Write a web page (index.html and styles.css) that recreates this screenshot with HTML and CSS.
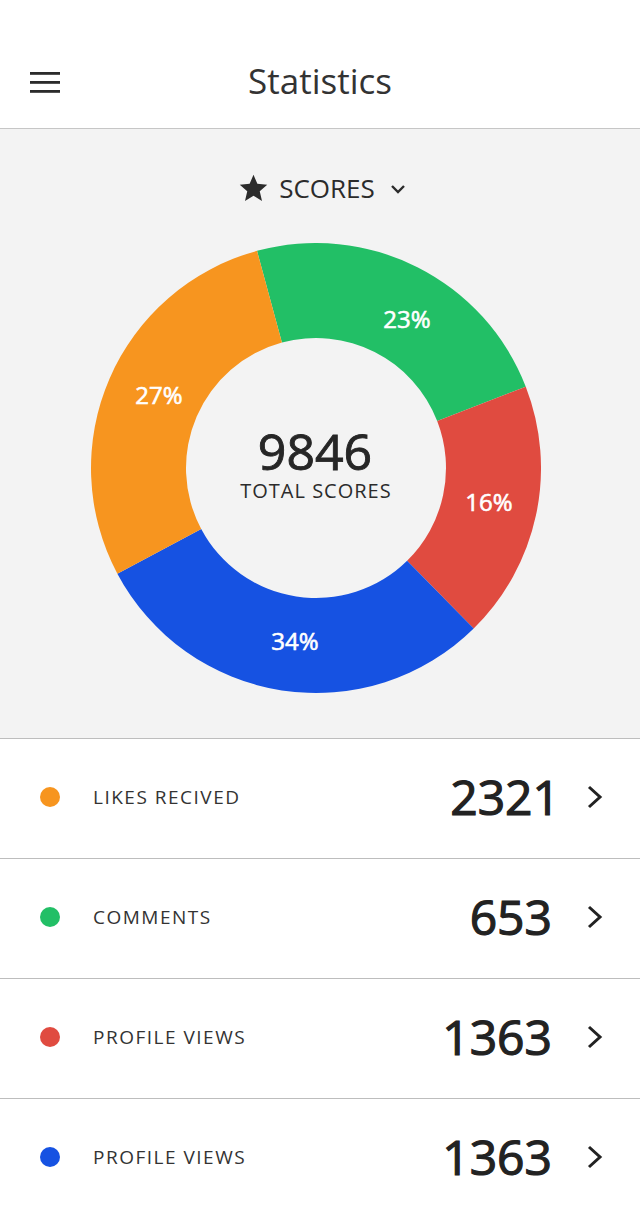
FILE: index.html
```html
<!DOCTYPE html>
<html lang="en">
<head>
<meta charset="utf-8">
<title>Statistics</title>
<link rel="stylesheet" href="styles.css">
</head>
<body>
<div class="app">
  <header class="topbar">
    <button class="menu-btn" aria-label="Menu">
      <svg width="30" height="21" viewBox="0 0 30 21"><rect x="0" y="0" width="30" height="2.8" fill="#2b2b2b"/><rect x="0" y="9" width="30" height="2.8" fill="#2b2b2b"/><rect x="0" y="18" width="30" height="2.8" fill="#2b2b2b"/></svg>
    </button>
    <h1 class="title">Statistics</h1>
    <span class="spacer"></span>
  </header>

  <section class="chart-panel">
    <div class="selector">
      <svg class="star" width="33" height="33" viewBox="0 0 24 24"><path d="M12 17.27L18.18 21l-1.64-7.03L22 9.24l-7.19-.61L12 2 9.19 8.63 2 9.24l5.46 4.73L5.82 21z" fill="#2b2b2b"/></svg>
      <span class="selector-label">SCORES</span>
      <svg class="caret" width="16" height="12" viewBox="0 0 16 12"><path d="M2 3 L8 9 L14 3" fill="none" stroke="#2b2b2b" stroke-width="2.4"/></svg>
    </div>
    <div class="donut-wrap">
      <svg class="donut" width="450" height="450" viewBox="0 0 450 450">
        <path d="M166.01,7.87 A225,225 0 0 1 434.77,143.64 L346.20,177.99 A130,130 0 0 0 190.91,99.55 Z" fill="#22bf66"/>
        <path d="M434.77,143.64 A225,225 0 0 1 382.70,385.49 L316.12,317.73 A130,130 0 0 0 346.20,177.99 Z" fill="#e04b40"/>
        <path d="M382.70,385.49 A225,225 0 0 1 26.35,330.64 L110.22,286.04 A130,130 0 0 0 316.12,317.73 Z" fill="#1652e2"/>
        <path d="M26.35,330.64 A225,225 0 0 1 166.01,7.87 L190.91,99.55 A130,130 0 0 0 110.22,286.04 Z" fill="#f7951f"/>
        <text class="pct" x="316" y="85">23%</text>
        <text class="pct" x="68" y="161">27%</text>
        <text class="pct" x="398" y="268">16%</text>
        <text class="pct" x="204" y="407">34%</text>
        <text class="total" x="224" y="227">9846</text>
        <text class="total-label" x="225" y="255">TOTAL SCORES</text>
      </svg>
    </div>
  </section>

  <ul class="stats">
    <li class="stat">
      <span class="dot dot-orange"></span>
      <span class="stat-label">LIKES RECIVED</span>
      <span class="stat-value stat-value-wide">2321</span>
      <svg class="chev" width="18" height="26" viewBox="0 0 18 26"><path d="M3 3 L14 13 L3 23" fill="none" stroke="#222" stroke-width="3"/></svg>
    </li>
    <li class="stat">
      <span class="dot dot-green"></span>
      <span class="stat-label">COMMENTS</span>
      <span class="stat-value">653</span>
      <svg class="chev" width="18" height="26" viewBox="0 0 18 26"><path d="M3 3 L14 13 L3 23" fill="none" stroke="#222" stroke-width="3"/></svg>
    </li>
    <li class="stat">
      <span class="dot dot-red"></span>
      <span class="stat-label">PROFILE VIEWS</span>
      <span class="stat-value">1363</span>
      <svg class="chev" width="18" height="26" viewBox="0 0 18 26"><path d="M3 3 L14 13 L3 23" fill="none" stroke="#222" stroke-width="3"/></svg>
    </li>
    <li class="stat">
      <span class="dot dot-blue"></span>
      <span class="stat-label">PROFILE VIEWS</span>
      <span class="stat-value">1363</span>
      <svg class="chev" width="18" height="26" viewBox="0 0 18 26"><path d="M3 3 L14 13 L3 23" fill="none" stroke="#222" stroke-width="3"/></svg>
    </li>
  </ul>
</div>
</body>
</html>
```

FILE: styles.css
```css
* { box-sizing: border-box; }
html, body { margin: 0; padding: 0; background: #fff; }
body {
  font-family: "Open Sans", "Noto Sans", "Liberation Sans", sans-serif;
  color: #2b2b2b;
  width: 640px;
}
.app { width: 640px; }

.topbar {
  height: 129px;
  border-bottom: 1px solid #c6c6c6;
  display: grid;
  grid-template-columns: 100px 1fr 100px;
  align-items: center;
  padding-top: 34px;
}
.menu-btn {
  border: 0;
  background: none;
  padding: 0 0 0 30px;
  margin: 3px 0 0 0;
  display: flex;
  align-items: center;
  height: 21px;
  justify-self: start;
}
.menu-btn svg { display: block; }
.title {
  margin: 0;
  text-align: center;
  font-size: 35px;
  font-weight: 400;
  color: #333;
  line-height: 40px;
}

.chart-panel {
  background: #f3f3f3;
  border-bottom: 1px solid #bdbdbd;
  height: 610px;
  padding-top: 38px;
}
.selector {
  display: flex;
  align-items: center;
  justify-content: center;
  height: 42px;
  padding-left: 3px;
}
.star { display: block; margin-right: 9px; }
.selector-label {
  font-size: 26px;
  line-height: 42px;
  color: #2b2b2b;
}
.caret { display: block; margin-left: 15px; margin-top: 2px; }

.donut-wrap {
  display: flex;
  justify-content: center;
  padding-right: 9px;
  margin-top: 34px;
}
.donut { display: block; }
.pct {
  fill: #fff;
  stroke: #fff;
  stroke-width: 0.6px;
  font-family: "Open Sans", sans-serif;
  font-size: 24px;
  font-weight: 400;
  text-anchor: middle;
}
.total {
  fill: #262626;
  stroke: #262626;
  stroke-width: 0.9px;
  font-family: "Open Sans", sans-serif;
  font-size: 50px;
  font-weight: 400;
  text-anchor: middle;
}
.total-label {
  fill: #2b2b2b;
  font-family: "Open Sans", sans-serif;
  font-size: 20px;
  letter-spacing: 1px;
  text-anchor: middle;
}

.stats { list-style: none; margin: 0; padding: 0; }
.stat {
  height: 120px;
  border-bottom: 1px solid #bdbdbd;
  display: flex;
  align-items: center;
  padding: 0 36px 4px 40px;
}
.stat:last-child { border-bottom: 0; }
.dot {
  width: 20px;
  height: 20px;
  border-radius: 50%;
  flex: none;
}
.dot-orange { background: #f7951f; }
.dot-green { background: #22bf66; }
.dot-red { background: #e04b40; }
.dot-blue { background: #1652e2; }
.stat-label {
  flex: 1;
  margin-left: 33px;
  font-size: 19px;
  letter-spacing: 1.5px;
  color: #333;
}
.stat-value {
  font-size: 48px;
  font-weight: 400;
  -webkit-text-stroke: 1.2px #222;
  color: #222;
  line-height: 60px;
  margin-right: 34px;
}
.stat-value-wide { margin-right: 26px; }
.chev { display: block; flex: none; }
```
